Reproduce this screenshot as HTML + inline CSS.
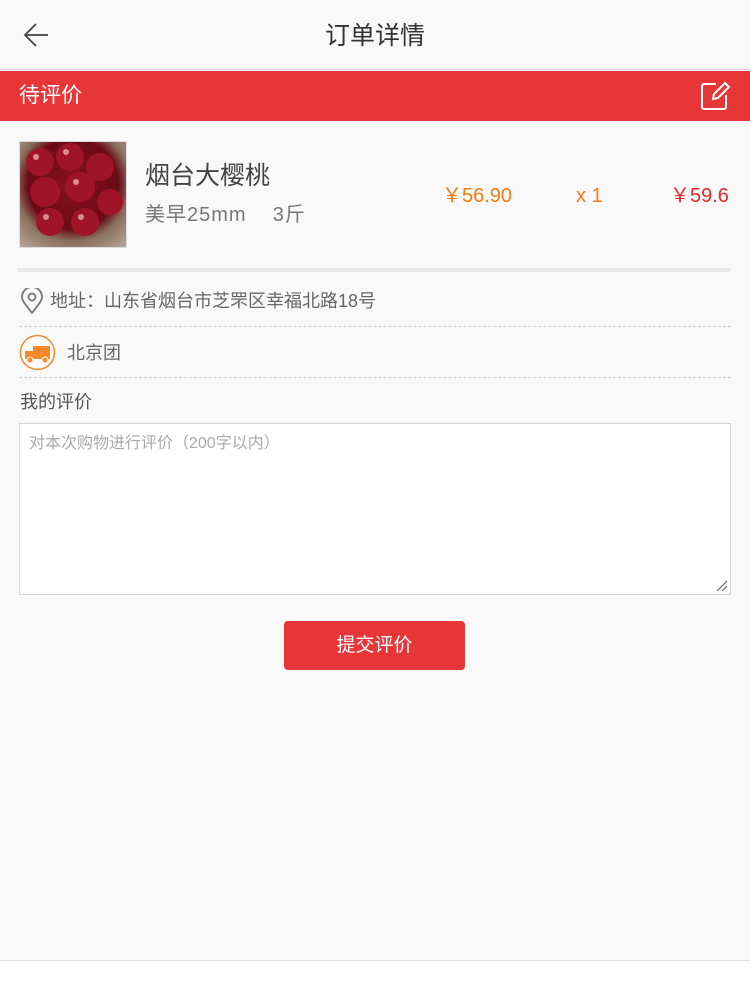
<!DOCTYPE html>
<html><head><meta charset="utf-8"><style>
*{margin:0;padding:0;box-sizing:border-box}
body{width:750px;height:1000px;background:#f9f9f9;font-family:"Liberation Sans","Noto Sans CJK SC",sans-serif;position:relative;overflow:hidden;color:#555}
.abs{position:absolute}
</style></head><body>
<div class="abs" style="left:0;top:0;width:750px;height:70px;border-bottom:1px solid #ddd;background:#f9f9f9"></div>
<svg class="abs" style="left:22px;top:20px" width="30" height="30" viewBox="0 0 30 30"><path d="M26 15H3M14 4L3 15l11 11" fill="none" stroke="#444" stroke-width="1.8"/></svg>
<div class="abs" style="left:0;width:750px;top:18px;text-align:center;font-size:25px;color:#333;line-height:36px">订单详情</div>
<div class="abs" style="left:0;top:71px;width:750px;height:50px;background:#e73538"></div>
<div class="abs" style="left:19px;top:82px;font-size:21px;color:#fff;line-height:28px">待评价</div>
<svg class="abs" style="left:700px;top:81px" width="32" height="30" viewBox="0 0 32 30"><path d="M16 3H4a2 2 0 0 0-2 2v21a2 2 0 0 0 2 2h20a2 2 0 0 0 2-2V14" fill="none" stroke="#fff" stroke-width="2"/><path d="M13 18l1-5L25 2l4 4-11 11z" fill="none" stroke="#fff" stroke-width="2"/></svg>
<div class="abs" style="left:19px;top:141px;width:108px;height:107px;border:1px solid #ddd;background:radial-gradient(circle at 50% 40%,#8a1020 0,#6a0a18 55%,#8a7060 70%,#b8a89a 100%)">
<svg width="106" height="105" viewBox="0 0 106 105"><g fill="#a0142a"><circle cx="20" cy="20" r="14"/><circle cx="50" cy="15" r="14"/><circle cx="80" cy="25" r="14"/><circle cx="25" cy="50" r="15"/><circle cx="60" cy="45" r="15"/><circle cx="90" cy="60" r="13"/><circle cx="30" cy="80" r="14"/><circle cx="65" cy="80" r="14"/></g><g fill="#f2c0c0" opacity=".7"><circle cx="16" cy="15" r="3"/><circle cx="46" cy="10" r="3"/><circle cx="56" cy="40" r="3"/><circle cx="26" cy="75" r="3"/><circle cx="61" cy="75" r="3"/></g></svg></div>
<div class="abs" style="left:145px;top:160px;font-size:25px;color:#444;line-height:32px">烟台大樱桃</div>
<div class="abs" style="left:145px;top:201px;font-size:20px;color:#777;line-height:28px;letter-spacing:1px">美早25mm&nbsp;&nbsp;&nbsp;&nbsp;3斤</div>
<div class="abs" style="left:442px;top:182px;font-size:20px;color:#f57b12;line-height:28px">￥56.90</div>
<div class="abs" style="left:576px;top:182px;font-size:20px;color:#f57b12;line-height:28px">x 1</div>
<div class="abs" style="left:670px;top:182px;font-size:20px;color:#e32a2d;line-height:28px">￥59.6</div>
<div class="abs" style="left:18px;top:268px;width:713px;height:4px;background:#e8e8e8"></div>
<svg class="abs" style="left:20px;top:288px" width="24" height="27" viewBox="0 0 24 27"><path d="M12 25C6 17 2 13 2 9a10 10 0 0 1 20 0c0 4-4 8-10 16z" fill="none" stroke="#777" stroke-width="1.8"/><circle cx="12" cy="9" r="3.5" fill="none" stroke="#777" stroke-width="1.8"/></svg>
<div class="abs" style="left:50px;top:288px;font-size:18px;color:#666;line-height:26px">地址：山东省烟台市芝罘区幸福北路18号</div>
<div class="abs" style="left:19px;top:326px;width:712px;border-top:1px dashed #ccc"></div>
<svg class="abs" style="left:19px;top:334px" width="37" height="37" viewBox="0 0 37 37"><circle cx="18.5" cy="18.5" r="17" fill="none" stroke="#f58a2a" stroke-width="1.5"/><path d="M14 12h17v13H14zM6 17h8v8H6z" fill="#f58a2a"/><circle cx="11" cy="26" r="3" fill="#f58a2a" stroke="#fff"/><circle cx="26" cy="26" r="3" fill="#f58a2a" stroke="#fff"/></svg>
<div class="abs" style="left:67px;top:340px;font-size:18px;color:#666;line-height:26px">北京团</div>
<div class="abs" style="left:19px;top:377px;width:712px;border-top:1px dashed #ccc"></div>
<div class="abs" style="left:20px;top:389px;font-size:18px;color:#555;line-height:26px">我的评价</div>
<div class="abs" style="left:19px;top:423px;width:712px;height:172px;background:#fff;border:1px solid #d5d5d5"></div>
<div class="abs" style="left:29px;top:432px;font-size:16px;color:#aaa;line-height:24px">对本次购物进行评价（200字以内）</div>
<svg class="abs" style="left:716px;top:580px" width="12" height="12"><path d="M1 11L11 1M6 11l5-5" stroke="#666" stroke-width="1.2"/></svg>
<div class="abs" style="left:284px;top:621px;width:181px;height:49px;background:#e73538;border-radius:4px;color:#fff;font-size:19px;line-height:49px;text-align:center">提交评价</div>
<div class="abs" style="left:0;top:960px;width:750px;height:40px;border-top:1px solid #ddd;background:#fff"></div>
</body></html>
